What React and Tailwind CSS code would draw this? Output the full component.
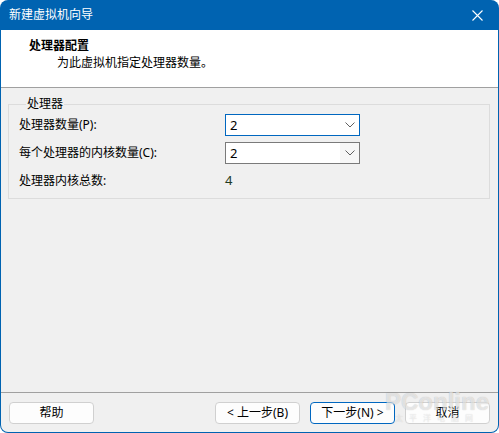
import React from "react";

const font = "font-['Noto_Sans','Noto_Sans_CJK_SC',sans-serif]";

function Chevron() {
  return (
    <svg width="10" height="6" viewBox="0 0 10 6" className="shrink-0">
      <path d="M0.5 0.5 L5 5 L9.5 0.5" fill="none" stroke="#606060" strokeWidth="1" />
    </svg>
  );
}

function Select({ value, focused }) {
  return (
    <div
      className={
        focused
          ? "h-[22px] w-[135px] flex items-center bg-white border border-[#0067c0] pl-[4px]"
          : "h-[22px] w-[135px] flex items-center bg-white border border-[#7a7a7a] pl-[4px]"
      }
    >
      <span className="flex-1 text-[13px] leading-[20px] text-black">{value}</span>
      <div
        className={
          focused
            ? "w-[19px] h-full flex items-center justify-center"
            : "w-[19px] h-full flex items-center justify-center bg-[#f7f7f7]"
        }
      >
        <Chevron />
      </div>
    </div>
  );
}

function Button({ children, primary }) {
  return (
    <button
      className={
        primary
          ? "w-[85px] h-[22px] rounded-[4px] bg-[#fdfdfd] border border-[#0067c0] text-[12px] leading-[20px] text-black"
          : "w-[85px] h-[22px] rounded-[4px] bg-[#fdfdfd] border border-[#d0d0d0] text-[12px] leading-[20px] text-black"
      }
    >
      {children}
    </button>
  );
}

export default function App() {
  return (
    <div className={`w-[499px] h-[433px] bg-white ${font}`}>
      <div className="w-full h-full flex flex-col bg-[#0063b1] rounded-[8px] px-[1px] pb-[1px] overflow-hidden relative">
        {/* title bar */}
        <div className="h-[30px] shrink-0 flex items-center justify-between pl-[8px] pr-[15px]">
          <span className="text-white text-[12px] leading-[16px]">新建虚拟机向导</span>
          <svg width="11" height="11" viewBox="0 0 11 11">
            <path d="M0.5 0.5 L10.5 10.5 M10.5 0.5 L0.5 10.5" stroke="white" strokeWidth="1.1" />
          </svg>
        </div>

        <div className="flex-1 flex flex-col bg-[#f0f0f0] rounded-b-[7px] overflow-hidden">
          {/* header */}
          <div className="h-[58px] shrink-0 bg-white border-b border-[#a0a0a0] pl-[28px] pt-[8px]">
            <div className="text-[12px] leading-[16px] font-bold text-black">处理器配置</div>
            <div className="text-[12px] leading-[16px] text-black pl-[28px] mt-[1px]">为此虚拟机指定处理器数量。</div>
          </div>

          {/* body */}
          <div className="flex-1 pt-[8px] pl-[7px] pr-[8px]">
            <fieldset className="border border-[#dcdcdc] pl-[10px] pb-[6px]">
              <legend className="ml-[7px] px-[1px] text-[12px] leading-[16px] text-black">处理器</legend>
              <div className="grid grid-cols-[206px_135px] gap-y-[6px] mt-[2px] text-[12px] text-black">
                <div className="h-[22px] flex items-center">处理器数量(P):</div>
                <Select value="2" focused />
                <div className="h-[22px] flex items-center">每个处理器的内核数量(C):</div>
                <Select value="2" />
                <div className="h-[22px] flex items-center">处理器内核总数:</div>
                <div className="h-[22px] flex items-center text-[13px] text-[#1f3a1f]">4</div>
              </div>
            </fieldset>
          </div>

          {/* footer */}
          <div className="h-[40px] shrink-0 border-t border-[#a0a0a0] flex items-start justify-between pt-[9px] pl-[8px] pr-[8px]">
            <Button>帮助</Button>
            <div className="flex gap-[10px]">
              <Button>&lt; 上一步(B)</Button>
              <Button primary>下一步(N) &gt;</Button>
              <Button>取消</Button>
            </div>
          </div>
        </div>

        {/* watermark */}
        <div className="absolute right-[10px] bottom-[11px] pointer-events-none flex flex-col items-center">
          <span className="font-['Liberation_Sans',sans-serif] text-[24px] leading-[22px] font-bold text-white/60 [text-shadow:0_0_1px_rgba(0,0,0,0.25)]">
            PConline
          </span>
          <span className="text-[8px] leading-[9px] tracking-[6px] text-white/60 [text-shadow:0_0_1px_rgba(0,0,0,0.2)]">
            太平洋电脑网
          </span>
        </div>
      </div>
    </div>
  );
}
